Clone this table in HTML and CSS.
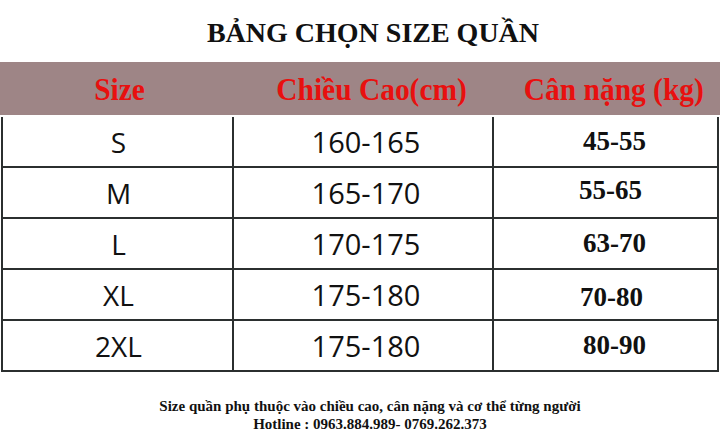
FILE: index.html
```html
<!DOCTYPE html>
<html lang="vi">
<head>
<meta charset="utf-8">
<title>Bảng chọn size quần</title>
<link rel="stylesheet" href="styles.css">
</head>
<body>
<div class="page">
  <h1 class="title">BẢNG CHỌN SIZE QUẦN</h1>
  <div class="head">
    <div class="hcell c1"><span>Size</span></div>
    <div class="hcell c2"><span>Chiều Cao(cm)</span></div>
    <div class="hcell c3"><span>Cân nặng (kg)</span></div>
  </div>
  <div class="table">
    <div class="cell sz">S</div><div class="cell ht">160-165</div><div class="cell wt">45-55</div>
    <div class="cell sz">M</div><div class="cell ht">165-170</div><div class="cell wt up">55-65</div>
    <div class="cell sz">L</div><div class="cell ht">170-175</div><div class="cell wt">63-70</div>
    <div class="cell sz">XL</div><div class="cell ht">175-180</div><div class="cell wt down">70-80</div>
    <div class="cell sz">2XL</div><div class="cell ht">175-180</div><div class="cell wt">80-90</div>
  </div>
  <div class="note">
    <p>Size quần phụ thuộc vào chiều cao, cân nặng và cơ thể từng người</p>
    <p>Hotline : 0963.884.989- 0769.262.373</p>
  </div>
</div>
</body>
</html>
```

FILE: styles.css
```css
* { box-sizing: border-box; }
html, body { margin: 0; padding: 0; background: #ffffff; }
.page { width: 720px; height: 446px; overflow: hidden; }

.title {
  margin: 0;
  height: 62px;
  display: flex;
  align-items: center;
  justify-content: center;
  padding: 4px 0 0 26px;
  font-family: "Liberation Serif", "Times New Roman", serif;
  font-weight: bold;
  font-size: 28px;
  color: #111111;
}

.head {
  height: 53px;
  background: #9e8586;
  display: grid;
  grid-template-columns: 235px 260px 225px;
  align-items: center;
}
.hcell {
  display: flex;
  justify-content: center;
  font-family: "Liberation Serif", "Times New Roman", serif;
  font-weight: bold;
  font-size: 32px;
  color: #e8100f;
  padding-top: 2px;
}
.hcell span { display: inline-block; transform: scaleX(0.92); }
.hcell.c1 { padding-left: 4px; }
.hcell.c2 { padding-left: 14px; }
.hcell.c3 { padding-left: 12px; }

.table {
  margin: 2px 0 0 1px;
  width: 718px;
  border-left: 2px solid #2b2f2f;
  border-right: 2px solid #2b2f2f;
  display: grid;
  grid-template-columns: 231px 260px 223px;
}
.cell {
  height: 51px;
  border-bottom: 2px solid #2b2f2f;
  display: flex;
  align-items: center;
  justify-content: center;
}
.sz, .ht {
  border-right: 2px solid #2b2f2f;
  font-family: "Open Sans", "Noto Sans", sans-serif;
  font-size: 28px;
  color: #111111;
}
.sz { padding-left: 2px; }
.ht { padding-left: 6px; font-size: 29px; }
.wt {
  font-family: "Liberation Serif", "Times New Roman", serif;
  font-weight: bold;
  font-size: 27px;
  color: #111111;
  padding-left: 18px;
}
.wt.up { padding-left: 10px; padding-bottom: 5px; }
.wt.down { padding-left: 12px; padding-top: 6px; }

.note {
  padding-top: 25px;
  text-align: center;
  font-family: "Liberation Serif", "Times New Roman", serif;
  font-weight: bold;
  font-size: 15px;
  line-height: 18px;
  color: #111111;
}
.note p { margin: 0; padding-left: 20px; }
```
